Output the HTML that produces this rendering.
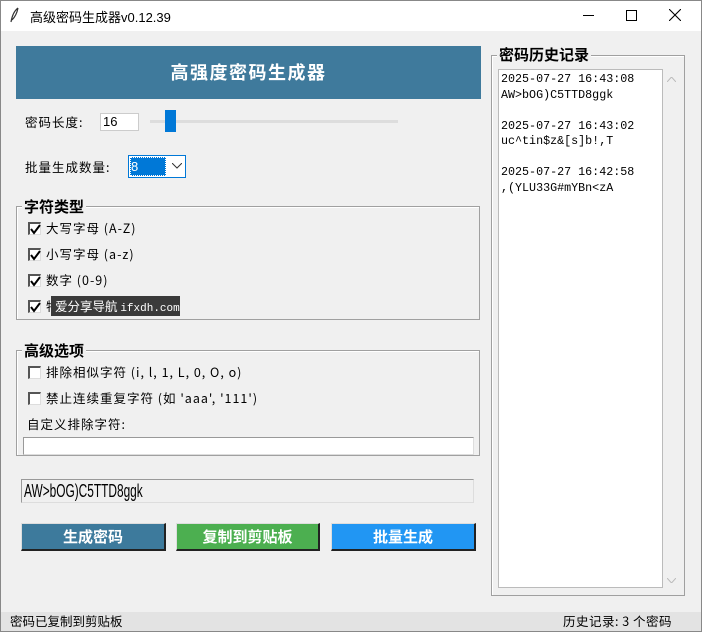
<!DOCTYPE html><html><head><meta charset="utf-8"><style>
*{margin:0;padding:0;box-sizing:border-box}
body{width:702px;height:632px;background:#f0f0f0;font-family:"Liberation Sans","Noto Sans CJK SC",sans-serif;position:relative;overflow:hidden;font-size:13px;color:#000}
.a{position:absolute;white-space:nowrap}
.cj{font-family:"Noto Sans CJK SC",sans-serif;letter-spacing:1px;font-size:12.5px;line-height:16px}
.cb{position:absolute;width:13px;height:13px;background:#fff;border-left:2px solid #555;border-top:2px solid #555;border-right:1px solid #ddd;border-bottom:1px solid #ddd}
.cb svg{position:absolute;left:0;top:0}
.g{position:absolute;border:1px solid #a0a0a0;box-shadow:1px 1px 0 #fff inset}
.gt{position:absolute;font-weight:bold;font-size:15px;background:#f0f0f0;padding:0 2px;line-height:17px;font-family:"Noto Sans CJK SC",sans-serif}
.btn{position:absolute;top:523px;height:28px;color:#fff;font-weight:bold;font-size:15px;text-align:center;line-height:26px;border-right:2px solid #222;border-bottom:2px solid #222;border-top:1px solid #ddd;border-left:1px solid #ddd;font-family:"Noto Sans CJK SC",sans-serif}
.mono{font-family:"Liberation Mono","DejaVu Sans Mono",monospace}
</style></head><body>
<div class="a" style="left:0;top:0;width:702px;height:632px;border:1px solid #888;z-index:9;pointer-events:none"></div>
<div class="a" style="left:0;top:0;width:702px;height:31px;background:#fff"></div>
<svg class="a" style="left:10px;top:7px" width="10" height="16"><path d="M8 1 C4 4 2 9 1 15 M8 1 C7 6 5 10 2 13" stroke="#333" fill="none" stroke-width="1.2"/></svg>
<div class="a" style="left:30px;top:7px;font-size:13px">高级密码生成器v0.12.39</div>
<div class="a" style="left:583px;top:15px;width:11px;height:1px;background:#000"></div>
<div class="a" style="left:626px;top:10px;width:11px;height:11px;border:1px solid #000"></div>
<svg class="a" style="left:669px;top:9px" width="12" height="12"><path d="M0 0L12 12M12 0L0 12" stroke="#000" stroke-width="1.1"/></svg>

<div class="a" style="left:16px;top:46px;width:465px;height:53px;background:#3f7a9c;color:#fff;font-weight:bold;font-size:18px;text-align:center;line-height:53px;letter-spacing:1.5px;font-family:'Noto Sans CJK SC',sans-serif">高强度密码生成器</div>
<div class="a cj" style="left:25px;top:114px">密码长度:</div>
<div class="a" style="left:100px;top:113px;width:39px;height:18px;background:#fff;border:1px solid #ccc;padding-left:2px;line-height:16px">16</div>
<div class="a" style="left:150px;top:120px;width:248px;height:3px;background:#ddd"></div>
<div class="a" style="left:165px;top:110px;width:11px;height:22px;background:#0078d7"></div>
<div class="a cj" style="left:25px;top:159px">批量生成数量:</div>
<div class="a" style="left:128px;top:155px;width:58px;height:23px;background:#fff;border:1px solid #0078d7"></div>
<div class="a" style="left:130px;top:157px;width:36px;height:19px;background:#0078d7;color:#fff;padding-left:1px;line-height:19px;outline:1px dotted #fff;outline-offset:-1px">8</div>
<svg class="a" style="left:172px;top:163px" width="10" height="6"><path d="M0 0L5 5L10 0" stroke="#333" fill="none"/></svg>

<div class="g" style="left:16px;top:206px;width:464px;height:114px"></div>
<div class="gt" style="left:22px;top:198px">字符类型</div>
<div class="cb" style="left:28px;top:222px"><svg width="11" height="11"><path d="M1 5L4 9L10 1" stroke="#000" stroke-width="2" fill="none"/></svg></div><div class="a cj" style="left:46px;top:220px">大写字母 (A-Z)</div>
<div class="cb" style="left:28px;top:248px"><svg width="11" height="11"><path d="M1 5L4 9L10 1" stroke="#000" stroke-width="2" fill="none"/></svg></div><div class="a cj" style="left:46px;top:246px">小写字母 (a-z)</div>
<div class="cb" style="left:28px;top:274px"><svg width="11" height="11"><path d="M1 5L4 9L10 1" stroke="#000" stroke-width="2" fill="none"/></svg></div><div class="a cj" style="left:46px;top:272px">数字 (0-9)</div>
<div class="cb" style="left:28px;top:300px"><svg width="11" height="11"><path d="M1 5L4 9L10 1" stroke="#000" stroke-width="2" fill="none"/></svg></div><div class="a cj" style="left:46px;top:298px">特殊字符</div>
<div class="a" style="left:51px;top:296px;width:129px;height:20px;background:#3a3a3a;color:#fff;line-height:20px;padding-left:4px;font-size:12.5px;font-family:'Noto Sans CJK SC',sans-serif">爱分享导航 <span class="mono" style="font-size:11px">ifxdh.com</span></div>

<div class="g" style="left:16px;top:350px;width:464px;height:106px"></div>
<div class="gt" style="left:22px;top:342px">高级选项</div>
<div class="cb" style="left:28px;top:366px"></div><div class="a cj" style="left:46px;top:364px">排除相似字符 (i, l, 1, L, 0, O, o)</div>
<div class="cb" style="left:28px;top:392px"></div><div class="a cj" style="left:46px;top:390px">禁止连续重复字符 (如 'aaa', '111')</div>
<div class="a cj" style="left:27px;top:416px">自定义排除字符:</div>
<div class="a" style="left:23px;top:437px;width:451px;height:18px;background:#fff;border:1px solid #999;border-right-color:#ddd;border-bottom-color:#ddd"></div>

<div class="a" style="left:21px;top:479px;width:453px;height:24px;background:#f0f0f0;border:1px solid #999;border-right-color:#ddd;border-bottom-color:#ddd;font-size:18px;line-height:22px;padding-left:2px"><span style="display:inline-block;transform:scaleX(0.66);transform-origin:left">AW&gt;bOG)C5TTD8ggk</span></div>
<div class="btn" style="left:21px;width:145px;background:#3d7a9c">生成密码</div>
<div class="btn" style="left:176px;width:144px;background:#4caf50">复制到剪贴板</div>
<div class="btn" style="left:331px;width:145px;background:#2196f3">批量生成</div>

<div class="g" style="left:491px;top:55px;width:194px;height:541px"></div>
<div class="gt" style="left:497px;top:46px">密码历史记录</div>
<div class="a mono" style="left:498px;top:69px;width:165px;height:519px;background:#fff;border:1px solid #bbb;font-size:11.7px;line-height:15.5px;padding:2px 0 0 2px;white-space:pre">2025-07-27 16:43:08
AW&gt;bOG)C5TTD8ggk

2025-07-27 16:43:02
uc^tin$z&amp;[s]b!,T

2025-07-27 16:42:58
,(YLU33G#mYBn&lt;zA</div>
<div class="a" style="left:663px;top:69px;width:17px;height:519px;background:#f0f0f0"></div>
<svg class="a" style="left:667px;top:77px" width="9" height="5"><path d="M0 5L4.5 0L9 5" stroke="#bbb" fill="none"/></svg>
<svg class="a" style="left:667px;top:578px" width="9" height="5"><path d="M0 0L4.5 5L9 0" stroke="#bbb" fill="none"/></svg>

<div class="a" style="left:1px;top:612px;width:700px;height:19px;background:#e3e3e3"></div>
<div class="a cj" style="left:10px;top:613px;letter-spacing:0">密码已复制到剪贴板</div>
<div class="a cj" style="left:563px;top:613px;letter-spacing:0.5px">历史记录: 3 个密码</div>
</body></html>
